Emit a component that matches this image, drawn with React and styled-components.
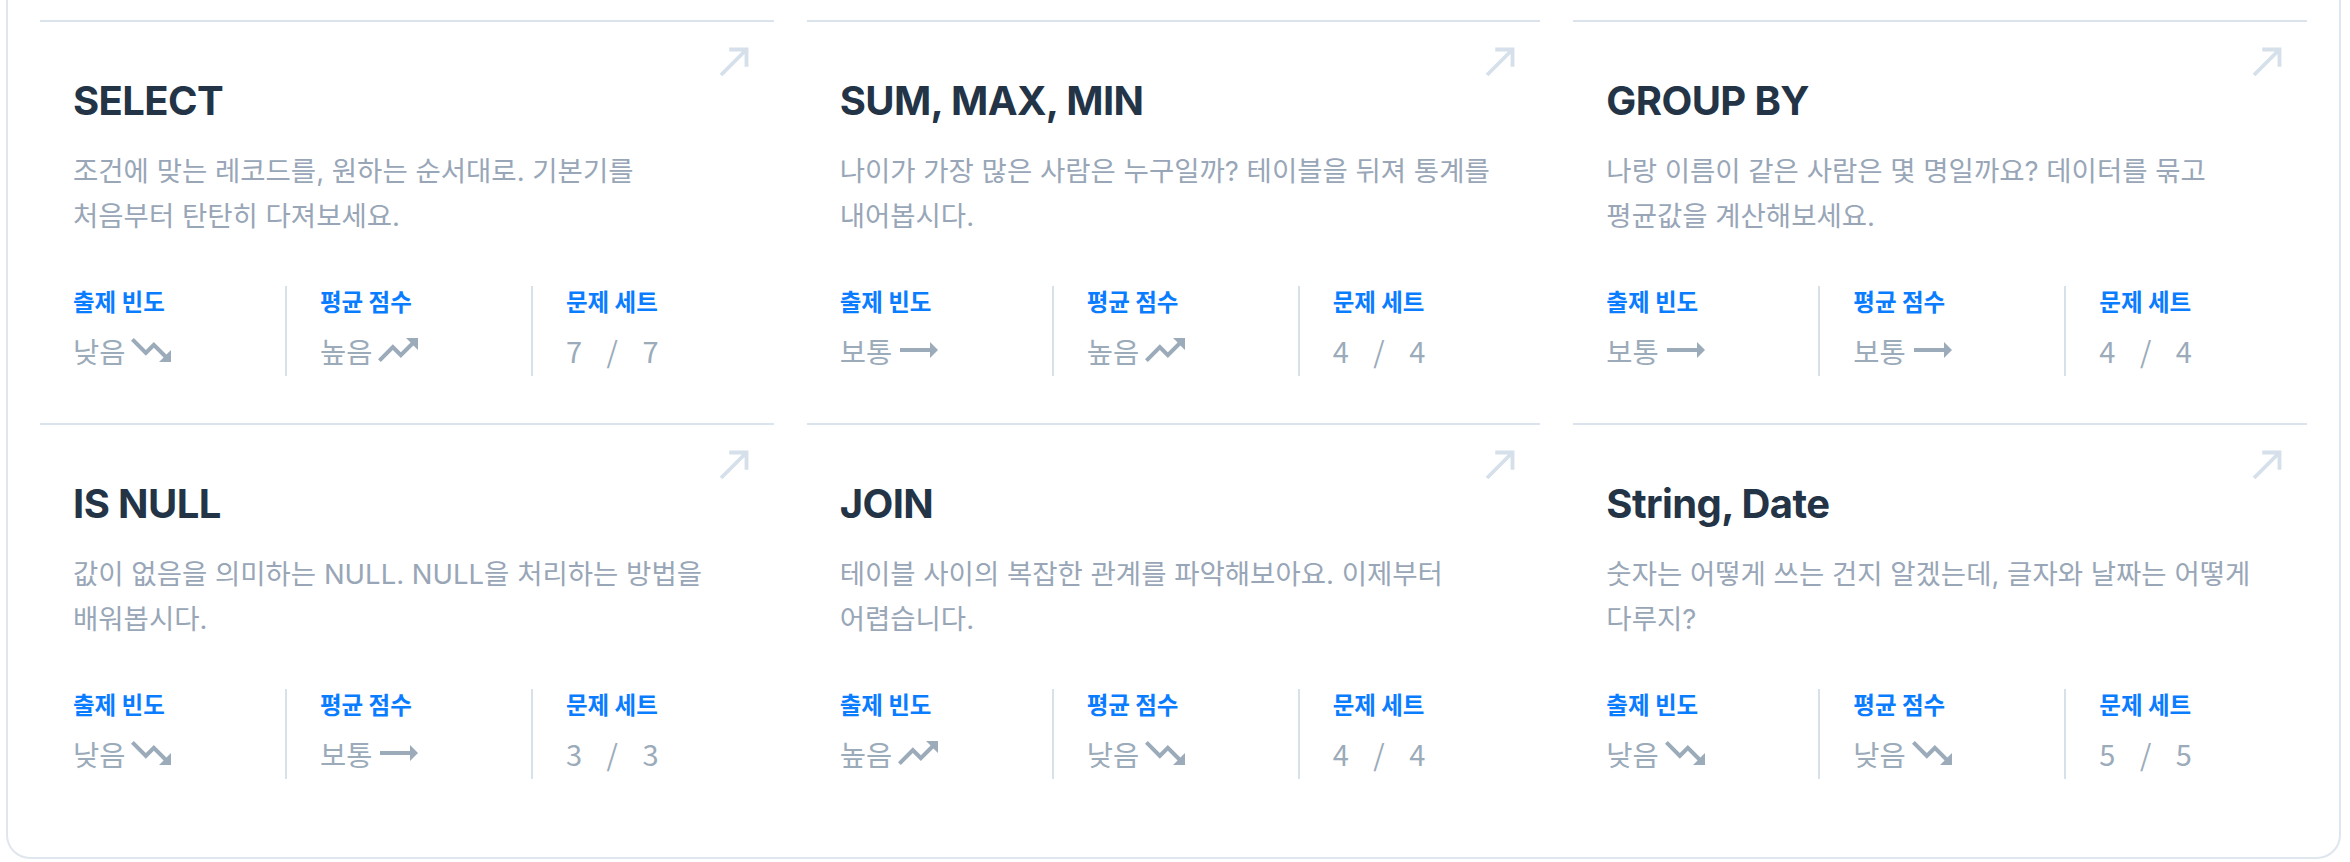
import React from "react";
import styled, { createGlobalStyle } from "styled-components";
import { MdNorthEast, MdTrendingDown, MdTrendingFlat, MdTrendingUp } from "react-icons/md";

const GlobalStyle = createGlobalStyle`
  body {
    margin: 0;
    background: #ffffff;
    font-family: Inter, "Noto Sans CJK KR", sans-serif;
  }
`;

const Board = styled.section`
  box-sizing: border-box;
  width: 2335px;
  margin-left: 6px;
  padding: 20px 32px 31px;
  border: 2px solid #dfe6ee;
  border-top: none;
  border-radius: 0 0 24px 24px;
  display: grid;
  grid-template-columns: repeat(3, minmax(0, 1fr));
  column-gap: 33px;
`;

const Card = styled.article`
  position: relative;
  min-width: 0;
  border-top: 2px solid #dbe4ed;
  padding: 56px 33px 47px;
  cursor: pointer;
`;

const Corner = styled.span`
  position: absolute;
  top: 16px;
  right: 16px;
  display: flex;
  color: #d5e0ea;
`;

const Title = styled.h3`
  margin: 0;
  font-family: Inter, "Noto Sans CJK KR", sans-serif;
  font-size: 40px;
  line-height: 46px;
  font-weight: 700;
  letter-spacing: -0.6px;
  color: #233447;
`;

const Desc = styled.p`
  margin: 25px 0 0;
  font-family: Inter, "Noto Sans CJK KR", sans-serif;
  font-size: 27.5px;
  line-height: 45px;
  color: #98a6b7;
  white-space: pre-line;
`;

const Stats = styled.div`
  margin-top: 47px;
  display: flex;
`;

const Stat = styled.div`
  box-sizing: border-box;
  flex: none;
  width: 246px;
  padding: 0 0 2px 33px;
  border-left: 2px solid #d7e1ea;

  &:first-child {
    width: 212px;
    padding-left: 0;
    border-left: none;
  }

  &:last-child {
    width: auto;
  }
`;

const Label = styled.div`
  font-family: "Noto Sans CJK KR", sans-serif;
  font-size: 23.5px;
  line-height: 30px;
  font-weight: 700;
  color: #0a7cff;
`;

const Value = styled.div`
  margin-top: 10px;
  height: 48px;
  display: flex;
  align-items: center;
  gap: 2px;
  font-family: "Noto Sans CJK KR", sans-serif;
  font-size: 28.5px;
  color: #9babba;
`;

const Count = styled.span`
  white-space: pre;
  font-size: 29px;
  letter-spacing: 9px;
`;

const levels = {
    low: {text: '낮음', Icon: MdTrendingDown},
    mid: {text: '보통', Icon: MdTrendingFlat},
    high: {text: '높음', Icon: MdTrendingUp},
}

const topics = [
    {title: 'SELECT', desc: '조건에 맞는 레코드를, 원하는 순서대로. 기본기를\n처음부터 탄탄히 다져보세요.', freq: 'low', score: 'high', sets: 7},
    {title: 'SUM, MAX, MIN', desc: '나이가 가장 많은 사람은 누구일까? 테이블을 뒤져 통계를\n내어봅시다.', freq: 'mid', score: 'high', sets: 4},
    {title: 'GROUP BY', desc: '나랑 이름이 같은 사람은 몇 명일까요? 데이터를 묶고\n평균값을 계산해보세요.', freq: 'mid', score: 'mid', sets: 4},
    {title: 'IS NULL', desc: '값이 없음을 의미하는 NULL. NULL을 처리하는 방법을\n배워봅시다.', freq: 'low', score: 'mid', sets: 3},
    {title: 'JOIN', desc: '테이블 사이의 복잡한 관계를 파악해보아요. 이제부터\n어렵습니다.', freq: 'high', score: 'low', sets: 4},
    {title: 'String, Date', desc: '숫자는 어떻게 쓰는 건지 알겠는데, 글자와 날짜는 어떻게\n다루지?', freq: 'low', score: 'low', sets: 5},
]

function Level({level}) {
    const {text, Icon} = levels[level]
    return (
        <Value>
            <span>{text}</span>
            <Icon size={48}/>
        </Value>
    )
}

function TopicCard({item}) {
    return (
        <Card>
            <Corner><MdNorthEast size={46}/></Corner>
            <Title>{item.title}</Title>
            <Desc>{item.desc}</Desc>
            <Stats>
                <Stat>
                    <Label>출제 빈도</Label>
                    <Level level={item.freq}/>
                </Stat>
                <Stat>
                    <Label>평균 점수</Label>
                    <Level level={item.score}/>
                </Stat>
                <Stat>
                    <Label>문제 세트</Label>
                    <Value><Count>{item.sets} / {item.sets}</Count></Value>
                </Stat>
            </Stats>
        </Card>
    )
}

export default function App() {
    return (
        <>
            <GlobalStyle/>
            <Board>
                {topics.map((item, index) => <TopicCard key={index} item={item}/>)}
            </Board>
        </>
    )
}
